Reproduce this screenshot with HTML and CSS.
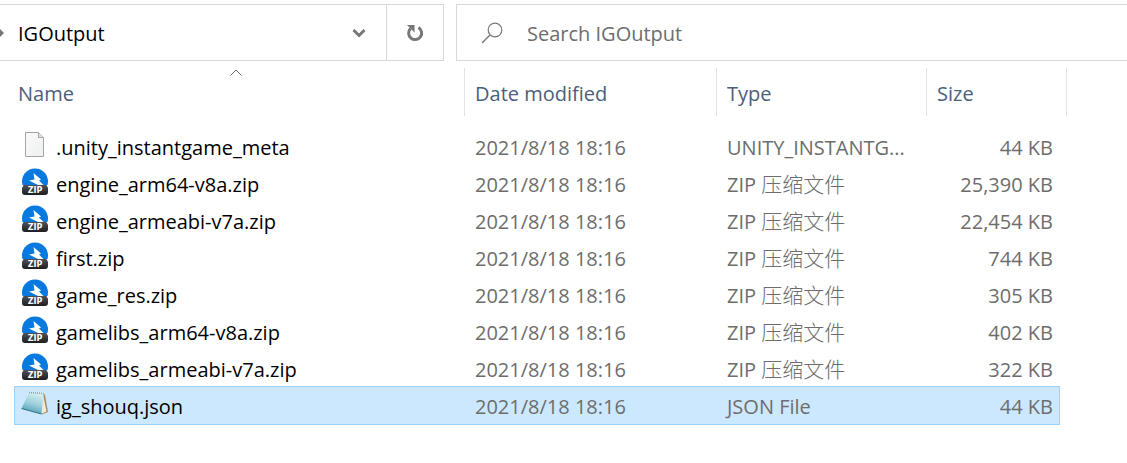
FILE: index.html
```html
<!DOCTYPE html>
<html lang="en">
<head>
<meta charset="utf-8">
<title>IGOutput</title>
<link rel="stylesheet" href="styles.css">
</head>
<body>
<svg class="defs" aria-hidden="true">
  <defs>
    <linearGradient id="dark" x1="0" y1="0" x2="0" y2="1"><stop offset="0" stop-color="#505256"/><stop offset="1" stop-color="#1d1e21"/></linearGradient>
    <linearGradient id="paper" x1="0" y1="0" x2="1" y2="1"><stop offset="0" stop-color="#fafafa"/><stop offset="1" stop-color="#eeeff0"/></linearGradient>
    <linearGradient id="pad" x1="0.6" y1="0" x2="0.3" y2="1"><stop offset="0" stop-color="#d5eff2"/><stop offset="0.5" stop-color="#9bcfdc"/><stop offset="1" stop-color="#4a9ab0"/></linearGradient>
    <symbol id="zip" viewBox="0 0 28 28">
      <path d="M1.500 17a13 13 0 1 1 25 0z" fill="#0879de"/>
      <path d="M12.500 5l7.500 6.500-2 1 4.500 4.500H17l-9-4.500 5.500-1z" fill="#fff"/>
      <path d="M2.500 17h23l1.500 3v4q0 3-3 3H4q-3 0-3-3v-4z" fill="url(#dark)"/>
      <text x="14" y="25" class="zip-label">ZIP</text>
    </symbol>
    <symbol id="blank" viewBox="0 0 28 28">
      <path d="M4.500 1.500h13l5 5v19h-18z" fill="url(#paper)" stroke="#a3a5a7"/>
      <path d="M17.500 1.500v5h5" fill="#dfe1e3" stroke="#a3a5a7"/>
    </symbol>
    <symbol id="note" viewBox="0 0 28 28">
      <path d="M22 3l2 2 3 17-6 2.500z" fill="#a58b63"/>
      <path d="M22 4l3.500 17.500-5.500 2.500z" fill="#f2ead5"/>
      <path d="M8 2.500l14.500 1L20.500 24 0.500 18.500z" fill="url(#pad)"/>
      <path d="M0.500 18.500l20 5.500" stroke="#2b7182"/>
      <path d="M8 2.500l14.500 1" stroke="#8d9ea2" stroke-width="1.500" stroke-dasharray="1 1"/>
    </symbol>
  </defs>
</svg>

<header class="toolbar">
  <nav class="address" aria-label="Address">
    <svg class="crumb-arrow" viewBox="0 0 4 8" aria-hidden="true"><path d="M0 0l4 4-4 4z"/></svg>
    <button class="crumb" type="button">IGOutput</button>
    <button class="drop" type="button" aria-label="Previous locations">
      <svg viewBox="0 0 14 10"><path d="M1.500 2L7 7.500 12.500 2" fill="none" stroke="#777" stroke-width="3"/></svg>
    </button>
    <button class="refresh" type="button" aria-label="Refresh">
      <svg viewBox="0 0 18 18"><path d="M12.500 3.500a6.500 6.500 0 1 1-8 1" fill="none" stroke="#777" stroke-width="3"/><path d="M1 1h7.500v7.500z" fill="#777"/></svg>
    </button>
  </nav>
  <label class="search">
    <svg viewBox="0 0 22 22" aria-hidden="true"><path d="M1 21l8-8" fill="none" stroke="#777" stroke-width="1.500"/><circle cx="14" cy="8" r="6.800" fill="none" stroke="#777" stroke-width="1.200"/></svg>
    <input type="search" placeholder="Search IGOutput" aria-label="Search IGOutput">
  </label>
</header>

<main class="files">
  <table>
    <colgroup><col><col class="c-date"><col class="c-type"><col class="c-size"><col class="c-end"></colgroup>
    <thead>
      <tr>
        <th class="name" aria-sort="ascending"><button type="button">Name<svg class="sort" viewBox="0 0 12 7" aria-hidden="true"><path d="M0.500 6.500L6 1l5.500 5.500" fill="none" stroke="#666"/></svg></button></th>
        <th><button type="button">Date modified</button></th>
        <th><button type="button">Type</button></th>
        <th colspan="2"><button type="button">Size</button></th>
      </tr>
    </thead>
    <tbody>
      <tr><td class="name"><span><svg class="icon"><use href="#blank"/></svg>.unity_instantgame_meta</span></td><td>2021/8/18 18:16</td><td>UNITY_INSTANTG...</td><td class="size">44 KB</td><td></td></tr>
      <tr><td class="name"><span><svg class="icon"><use href="#zip"/></svg>engine_arm64-v8a.zip</span></td><td>2021/8/18 18:16</td><td>ZIP <span class="cjk" lang="zh">压缩文件</span></td><td class="size">25,390 KB</td><td></td></tr>
      <tr><td class="name"><span><svg class="icon"><use href="#zip"/></svg>engine_armeabi-v7a.zip</span></td><td>2021/8/18 18:16</td><td>ZIP <span class="cjk" lang="zh">压缩文件</span></td><td class="size">22,454 KB</td><td></td></tr>
      <tr><td class="name"><span><svg class="icon"><use href="#zip"/></svg>first.zip</span></td><td>2021/8/18 18:16</td><td>ZIP <span class="cjk" lang="zh">压缩文件</span></td><td class="size">744 KB</td><td></td></tr>
      <tr><td class="name"><span><svg class="icon"><use href="#zip"/></svg>game_res.zip</span></td><td>2021/8/18 18:16</td><td>ZIP <span class="cjk" lang="zh">压缩文件</span></td><td class="size">305 KB</td><td></td></tr>
      <tr><td class="name"><span><svg class="icon"><use href="#zip"/></svg>gamelibs_arm64-v8a.zip</span></td><td>2021/8/18 18:16</td><td>ZIP <span class="cjk" lang="zh">压缩文件</span></td><td class="size">402 KB</td><td></td></tr>
      <tr><td class="name"><span><svg class="icon"><use href="#zip"/></svg>gamelibs_armeabi-v7a.zip</span></td><td>2021/8/18 18:16</td><td>ZIP <span class="cjk" lang="zh">压缩文件</span></td><td class="size">322 KB</td><td></td></tr>
      <tr class="selected"><td class="name"><span><svg class="icon"><use href="#note"/></svg>ig_shouq.json</span></td><td>2021/8/18 18:16</td><td>JSON File</td><td class="size">44 KB</td><td></td></tr>
    </tbody>
  </table>
</main>
</body>
</html>
```
FILE: styles.css
```css
* { box-sizing: border-box; }
body {
  margin: 0;
  background: #fff;
  color: #6d6d6d;
  font: 20px/28px "Open Sans", "Noto Sans CJK SC", sans-serif;
}
button, input {
  border: 0;
  padding: 0;
  background: none;
  color: inherit;
  font: inherit;
}
.defs { position: absolute; width: 0; height: 0; }
.zip-label {
  fill: #fff;
  font: bold 8px "DejaVu Sans", sans-serif;
  text-anchor: middle;
}

.toolbar {
  display: flex;
  gap: 12px;
  padding-top: 4px;
}
.address, .search {
  display: flex;
  align-items: center;
  height: 57px;
  border: 1px solid #d9d9d9;
}
.address { flex: 0 0 444px; border-left: 0; }
.crumb-arrow { width: 4px; height: 8px; fill: #777; }
.crumb { flex: 1; padding: 2px 0 0 14px; text-align: left; color: #000; }
.drop, .refresh {
  display: flex;
  align-items: center;
  justify-content: center;
  width: 54px;
  height: 100%;
}
.drop svg { width: 14px; height: 10px; }
.refresh { width: 57px; border-left: 1px solid #d9d9d9; }
.refresh svg { width: 18px; height: 18px; }
.search { flex: 1; min-width: 0; border-right: 0; padding-left: 24px; gap: 24px; }
.search svg { flex: none; width: 22px; height: 22px; }
.search input { flex: 1; min-width: 0; padding-top: 2px; outline: 0; }
.search input::placeholder { color: #6d6d6d; opacity: 1; }

.files { padding: 7px 60px 0 14px; }
table {
  width: 100%;
  table-layout: fixed;
  border-collapse: separate;
  border-spacing: 0;
}
.c-date { width: 252px; }
.c-type { width: 210px; }
.c-size { width: 133px; }
.c-end { width: 7px; }
th { padding: 0 0 11px; font-weight: 400; }
th button {
  position: relative;
  display: block;
  width: 100%;
  height: 48px;
  padding: 4px 0 0 10px;
  border-right: 1px solid #e3e3e3;
  color: #4c607a;
  text-align: left;
}
th.name button { width: calc(100% + 6px); margin-left: -6px; }
.sort {
  position: absolute;
  top: 1px;
  left: calc(50% - 6px);
  width: 12px;
  height: 7px;
}
td {
  height: 37px;
  padding: 4px 0 0 10px;
  white-space: nowrap;
}
td.name { padding-left: 7px; color: #000; }
td.name > span { display: flex; align-items: center; gap: 7px; }
td.size { padding: 4px 7px 0 0; text-align: right; }
td:last-child { padding: 0; }
.cjk { font: 300 21px/20px "Noto Sans CJK SC", sans-serif; }
.icon { flex: none; width: 28px; height: 28px; margin: -3px 0 3px; }
.selected td { height: 39px; }
.selected td:not(:last-child) {
  padding-top: 2px;
  background: #cce8ff;
  box-shadow: inset 0 1px #99d1ff, inset 0 -1px #99d1ff;
}
.selected td.name:first-child { box-shadow: inset 0 1px #99d1ff, inset 0 -1px #99d1ff, inset 1px 0 #99d1ff; }
.selected td.size:not(:last-child) { box-shadow: inset 0 1px #99d1ff, inset 0 -1px #99d1ff, inset -1px 0 #99d1ff; }
```
